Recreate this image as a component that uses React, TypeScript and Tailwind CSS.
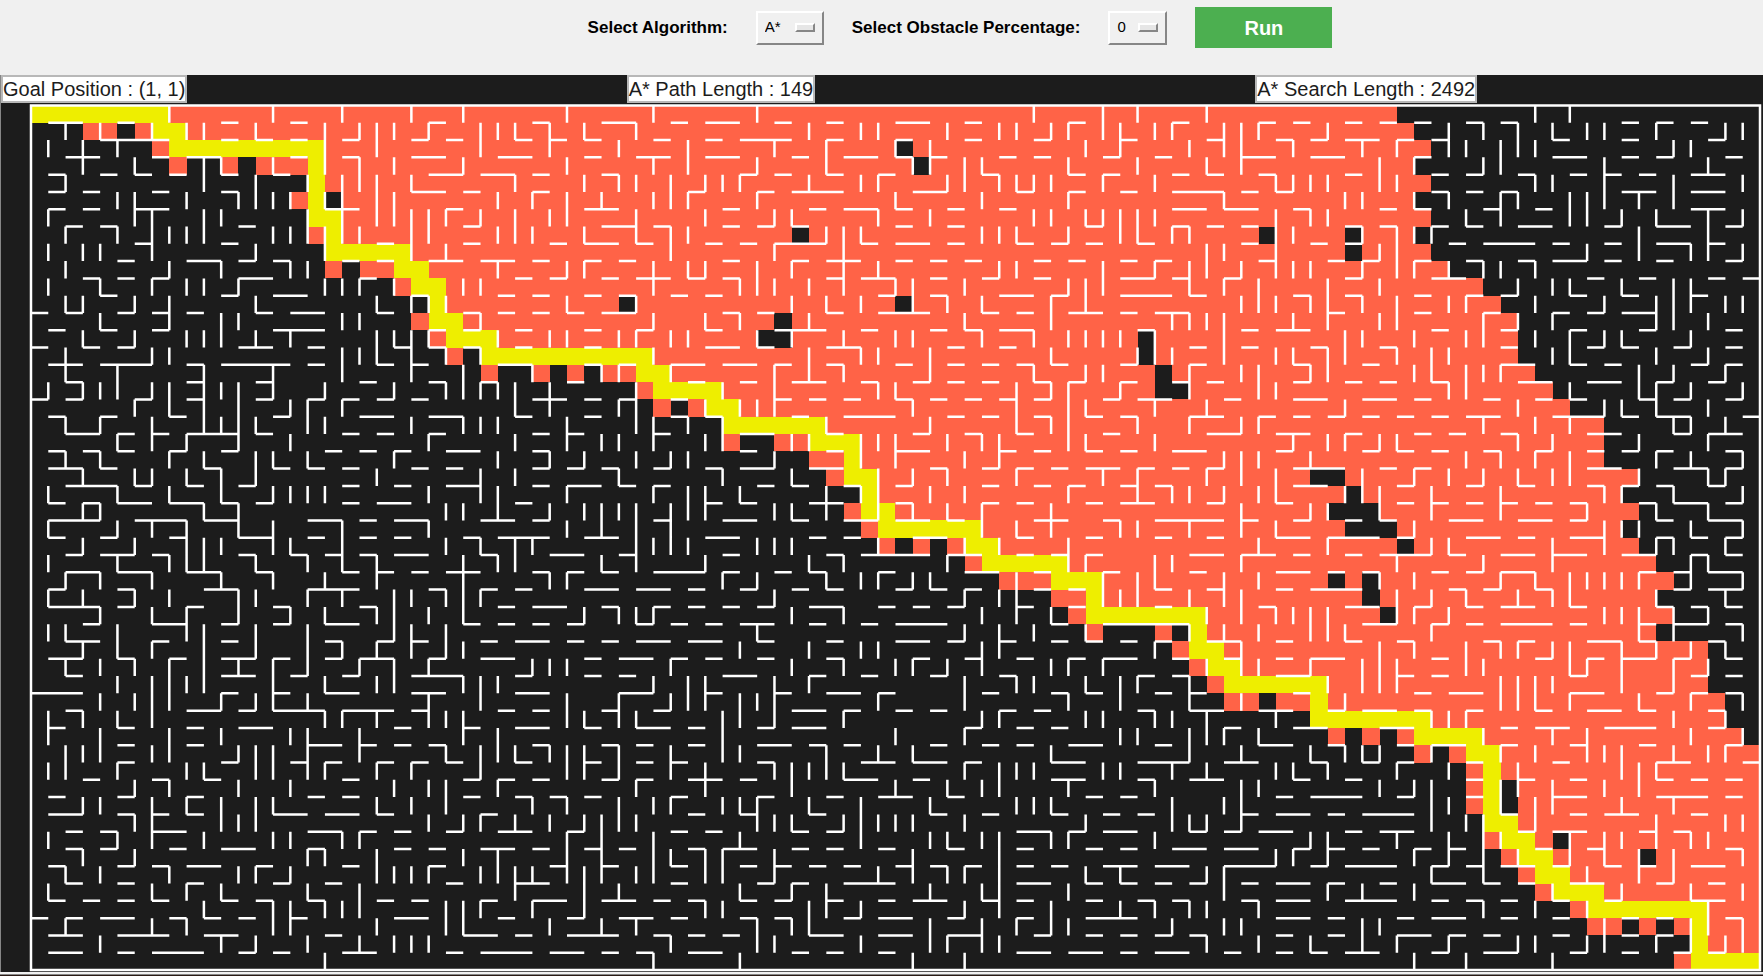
import React from 'react';

const COLS = 100;
const ROWS = 50;
const CELL = 17.3;

// Horizontal walls under each row: "column.length" (length defaults to 1).
const H_WALLS: string[] = [
  '1.2 5 11 15 23 29 33.2 37 39.2 43 46 50.2 54 60 66 71 73 76 78 80 83 85 92 94 96',
  '4.4 11 13 15 18 22 24 28 30 32 36 39 41.3 46 50 54 58 63 68 72 74 76.2 79 81 88 92 97',
  '2.2 7 9.2 15 18 22.2 27.2 32 35.2 39.2 44 47.2 50 52 56 58 62 65 70.2 74.2 80 88.2 92 94 98',
  '1 4 6 8 11 14 23.2 26.2 29 33 41 43 46 49 55 60 62 66 68 71 76 81 83 86 89 91 93 96.2',
  '1 3 7 11 22.2 25 29 38 42 44.3 51.2 57 60 63 66.3 70 72 81 83 85 92.2 96.2',
  '1 3 6.2 17.2 24 32.2 40 45 47.2 50 53 56 66.2 69.2 73 78 80 84 87 96.2',
  '2 4 12 25 33.2 36 40 42 44 50 53 61 66 68 70 76 78 81 83 86.2 91 94.2 98',
  '6 11 20 25 30 32.2 35 39 41 43.3 48 50.2 53 57 59 61 64 70 74 76 82 84.3 88 91 94.2 97',
  '5 9.2 12 14 18 20 23.2 26.2 29 32 34 40 44 46.2 50 52 54 58 60 63 65 71 75 77 80 83 86 88.2 91 94 98',
  '3 5 7 12.2 19 28 30 33 35.2 38 40 46 48.2 52 55 58 63.2 66 69 76 81.2 90 93 97 99',
  '4 11 14.2 22 27 29 32 34 37 39 49 52 56.2 59 63.3 67 73 76 80 83 85 89 92 96',
  '0 2 5 7 9 13 15.2 20 25 27 29 31 33.2 40 42 46 49.3 55 57 60.2 63 65.2 75 80 84 88 90 92.2',
  '1 4 7 14.3 23 25 28 32 35 39 43.3 48 52 54 56.2 64 70 72.2 81 85 89 93 98',
  '0 3 5 12.2 16 21 23 25 28 32 39.2 42 46.2 53 56 67 70 74 78 85 90 92 95 98',
  '1.2 4.3 9 11.4 16 20 22 27.2 32 34 37.2 40.2 43 46 50 53 55 57 59 63 67 73 77 85.2 89 91 96 98',
  '2 9 13 19 23 26 31 38 41 44.2 48 51 53 55 58 60 63 66 68 73 76 78 81 86.2 90.2 94 97',
  '0 2 6 9 13 16 18 20 22 29.2 32 34 37 43 45 47 50 52 54 56 58 62 64.2 69 73.2 77.2 80 84 87 89 93 95 98',
  '1 4 8 14 19.2 23.2 28 32 37 39 44 47.3 53 55 58 61 63 67.2 71 73 75 77 79 81 83.2 88.3 92 94.2 99',
  '2.2 5 7 9.3 13 18 20 23 29 31 36 41.2 46 51 54 57 62 68.2 72.2 76 80 82 85 90.2 95 97.2',
  '1 3 5 8 11 17 19 21 24.2 29 41 46 50.2 56 58 61 63 66.2 72 77 79 81 84 87 90 92 94 98',
  '1.2 4 10 14 16 18 22 24 29 31 33 36 39 41.2 45.2 52 55 57 59 61.2 64 66 68 73.3 78 80 90.2 95.2 98',
  '2.3 6 9 12 18 21 24.2 29 31.2 34 36 42 44 47 50 55 58 60 63 65 73.2 79 83 86 90 92 94 97',
  '1 3 5.2 8.2 11 13 18 20.2 28 39 41 45.2 50 55 57 61 63.2 68 72 79 81 83 85 87 89 93 95.2 98',
  '1.3 6.3 10.2 16.2 19 21.2 26.2 29 36 40.2 44 47.2 50.2 53 58.2 62 65.4 70 73 76 78 82.2 86.2 89 94 97.2',
  '1 4 8 12.2 16 19 21 25 27.3 32.2 39.2 45 47 51.2 57 61 65 68 72.2 75.3 79 83.2 86 89.2 94 96 98',
  '2 4.2 7 12 15 17 19 21.2 26 30.2 34 40 46 48.4 53.2 57 59 61 67.2 70.2 73 76 78.3 82 85.2 88.2 92.2 96 98',
  '2.2 5.2 9.2 13 18 20 22 24.2 29 31 33 36.3 40 43 45 49 54.2 58 62 67 72.2 75 77 81 83 85.2 93 95 97.2',
  '1 5 10.2 16.3 23 26 28 32.2 35.2 38 41 44 46 50 52 54 58 60 65 68 72 74.3 82 84 87 95 97.2',
  '1.3 5 9 14 19 27 29.2 33 36 38 40 42 45.2 49 51 53 57 60 65 71 76.2 80 83 85.2 89 94 96 98',
  '3 7.2 11 14 17.2 25 27 29 31 35 37 39 41.2 45 48 50.3 59 62.5 77.2 81 83 85.3 89 93 95.2 98',
  '2.2 7 11 17 20 22 26 28.2 31 33 35.2 38.2 42 46 50.2 53 56 59 61 63 65 68.2 72 76 79 84 86 90.2 93 97',
  '1.2 5 8 11.2 14 17 19.2 23 26.2 32 34.2 37 39 42 46 51 54 57 60 62.2 66 69 72 74.2 81 87 90 92.2 95 98',
  '2 11.2 15 18 22.3 28 32 34 40.2 45 48 52 56 64 66 72.2 79 81 89 96 98',
  '0.3 11 14 17.2 22.2 28.2 34.2 39 43 46.2 49 55 59 61 65 67 73 80 82.2 89.2 94 96 98',
  '2 9.2 12 14.3 18.3 22 27 29 33 36 44.2 47 50 52 56 58 64 67.2 71.2 75 77.2 80 83 87 90.2 93 97',
  '1 5 9 12.2 21 25 28.2 32 35.2 38 42 44.2 54 57 59 69 73.2 78.2 85 87.2 91.3 97',
  '5 9 16.2 19 21 23 29 33 35 38 42.2 45 47 52 55 57 60.2 65 71.2 75 79 81.2 85 89 93 98',
  '5 11 15 17 20 22 24 28 32 35 37 42 48.2 51.2 54 59.2 64.3 69.2 74 77 79 83 88 94.2 99',
  '3 7 10 18 25 27 29 33 35 38.2 41 47.2 51 59.2 64 67.2 73 76 83 86 89 94 96 98',
  '1 5 9 16 18 25 28 30 32 37 42 46 49.2 53 61 63 72 74.3 79 83 88.2 94.3 98',
  '1.2 5 7 9 14.2 17.2 20 26 38 41 45 52 55 59 62 64 70 72.2 75 77.3 85 89 91.2 96',
  '2 4 7.2 16.2 19 21 24 27.2 31 37 39 44 46 57.2 60 62.2 67 69 71.2 76 78.2 86 88.2 93 95',
  '2 4 8 11.2 16 21 23 26.2 29 32 34 38 40.2 44 46 49 53 57 61 63 66.2 69.2 73 75 77 80 82 87 90 98',
  '1 5 7 9.2 13 18 23 30 33 37 41 43 45 47 50 52 54 57 59 62.2 65.2 69.3 74 76.3 81 83 85.2 88 91 93 96.2',
  '2 5 9 14 17 24 28.2 37 42 44 47.3 57.2 61 63 65 67 70 72.2 75 78 81.2 84 86 89.2 94 97',
  '1 3 5 7 11 13 16 20 22 26 29.2 33.2 36 38 41 43 46 49 51.2 55 57 61 64 66 70 72.2 76.3 81 83 85 88 91 96.2',
  '0 2 4.2 8 10 12 15 21.2 27 31 34.2 37 41 43 47 49.2 53 57 61.3 72.2 75 79 81.2 85 88 92 94 98',
  '1.2 5.3 10.2 17 25.2 28 31.3 36 38 40 45.2 49.2 53.2 58 61 63 65 67 72 75 79.2 82 84 88 92 94',
  '1.2 5 7.3 12 14 18.2 24 26.3 30.2 33 35 38.2 44 46 49 57.2 60.2 63 65.2 69 72 74 76.2 81 84.2 89 92 95 97',
];

// Vertical walls in each row, listed by grid line.
const V_WALLS: string[] = [
  '8 14 18 22 25 31 36 42 58 62 64 68 87 89',
  '2 4 7 9 10 13 17 19 20 21 23 26 27 28 30 32 35 45 48 49 53 56 57 59 60 62 63 65 66 69 70 71 75 82 84 86 88 90 91 94 98 99',
  '1 3 5 17 20 26 30 34 38 43 46 50 52 61 63 67 69 70 73 77 79 82 83 85 86 87 95 96',
  '3 6 10 11 14 17 19 21 25 31 36 38 42 46 51 52 54 55 60 64 68 70 78 80 84 85 91 97',
  '2 10 13 16 18 19 20 22 28 32 34 35 37 39 40 41 45 48 49 53 54 56 57 58 59 62 65 72 73 74 75 78 79 87 88 91 95 99',
  '5 6 9 12 13 14 15 17 18 20 21 27 29 31 33 36 37 38 42 50 55 60 69 76 77 80 82 85 86 89 90 91 93 95',
  '1 6 7 10 11 16 18 20 21 22 23 24 26 28 30 31 35 39 43 44 49 52 58 59 61 62 63 64 65 72 74 75 83 85 89 90 92 94 97 99',
  '2 5 7 8 9 10 14 15 16 17 18 19 22 23 27 28 29 32 35 37 38 46 47 48 55 56 57 60 63 64 66 67 72 73 77 79 80 81 93 97',
  '1 3 4 7 13 17 22 24 37 43 47 68 69 72 78 79 90 93 96 97 99',
  '2 8 11 15 16 27 31 32 36 38 39 42 44 47 49 56 57 62 65 67 68 70 72 73 74 77 79 80 82 84 85 87',
  '1 4 7 9 10 12 17 18 19 21 25 26 36 41 42 43 45 47 50 51 54 60 61 62 67 69 71 75 78 86 88 89 92 95 96',
  '2 3 6 8 13 20 22 23 24 31 35 44 46 48 51 53 55 59 61 70 71 72 74 75 77 79 82 83 87 91 94 95 96 98 99',
  '4 8 11 12 18 19 26 36 39 41 45 54 59 66 67 68 69 73 75 78 79 84 86 88 94 95 97',
  '3 6 9 10 11 13 15 20 21 22 23 27 30 31 34 35 37 38 42 44 47 50 51 55 58 60 61 62 63 65 69 76 77 80 83 84 87 89 91 92 96',
  '2 7 8 18 19 20 22 24 26 36 45 48 49 52 59 64 65 66 69 72 73 75 76 79 81 82 88 89 94 97',
  '2 5 10 14 18 22 25 29 33 34 37 43 45 47 52 58 61 62 67 70 71 74 75 80 81 83 84 85 93 95 98',
  '1 3 4 5 7 8 10 11 12 14 17 21 24 25 26 27 28 30 35 40 43 49 50 57 59 60 63 67 71 72 82 83 89 93 94 96 99',
  '6 8 10 12 15 16 18 28 30 34 35 39 41 42 43 51 57 60 61 65 68 76 86 91 92 94 97',
  '2 4 7 10 11 12 13 16 17 22 25 26 27 31 35 36 38 40 46 52 57 59 60 64 67 70 71 84 87 89 95 96 98',
  '5 7 9 12 15 23 28 31 33 34 36 39 40 44 45 48 49 50 53 55 56 60 61 65 73 75 76 78 79 86 88 93 97',
  '2 4 8 10 13 14 16 21 27 30 32 35 37 38 43 48 50 54 56 69 70 71 74 83 85 87 89 94 96 99',
  '3 6 7 9 11 13 20 26 28 34 40 44 49 51 53 57 62 64 68 70 72 77 80 82 84 86 88 89 93 97 98',
  '1 5 8 11 14 15 16 17 23 26 27 31 36 38 39 41 46 48 49 52 54 60 64 66 67 69 71 72 76 77 78 81 85 91 92 95 99',
  '3 4 10 12 24 25 27 30 32 33 34 35 37 38 39 43 44 46 49 51 53 55 59 70 74 75 78 81 85 90 94 97',
  '1 5 7 9 12 14 18 23 31 33 35 37 55 57 59 63 64 67 70 72 80 91 92 93 96 99',
  '3 6 9 10 11 14 15 18 24 26 28 29 35 36 37 38 42 43 44 49 54 56 60 71 75 81 82 88 91 94 95 98',
  '1 5 8 9 10 13 16 18 20 25 27 28 33 35 39 45 47 53 60 61 65 66 70 79 84 88 96 97',
  '2 4 7 11 14 17 20 25 30 31 40 42 46 48 49 51 52 57 62 64 65 69 71 78 80 85 87 89 90 91 92 93 96 99',
  '1 3 6 8 12 13 16 18 21 22 24 25 26 43 54 56 57 62 63 64 67 69 70 79 81 83 86 88 89 94 98',
  '4 7 9 12 15 17 20 21 23 25 32 34 35 36 44 47 55 57 59 68 70 72 73 74 75 79 80 82 91 92 93 95 97',
  '1 2 5 9 10 13 16 21 22 24 42 54 56 58 61 67 69 71 74 75 76 81 93 95 99',
  '3 5 7 10 13 16 18 20 22 24 25 41 45 48 49 55 56 65 70 78 80 83 85 86 88 89 92 94 96 98',
  '2 4 6 8 10 12 14 16 19 21 23 29 30 31 37 44 47 50 51 53 55 59 60 62 68 70 71 74 77 78 79 83 84 89 90 92 95 97',
  '5 7 8 9 10 14 17 20 21 25 26 27 36 38 39 43 45 54 57 58 61 63 64 67 75 77 78 79 85 86 87 88 92 95',
  '4 6 7 8 11 13 14 16 23 26 31 34 37 38 39 41 42 43 49 54 60 63 67 70 76 85 86 87 89 93 96 99',
  '1 3 5 7 17 18 20 23 24 25 31 32 34 35 40 41 43 47 55 56 61 62 65 66 68 72 81 82 83 95 98',
  '1 4 8 11 15 16 19 25 27 40 50 54 63 64 67 68 69 71 84 88 90 96 99',
  '2 3 4 7 8 12 13 14 16 19 24 26 27 28 30 31 32 34 37 40 41 46 49 51 59 67 70 74 76 77 78 81 85 87 90 91 92 95 97 98',
  '1 2 5 9 10 13 14 16 17 20 22 26 31 32 34 37 39 43 44 45 46 47 54 56 57 58 62 63 66 68 72 73 75 79 82 86 92 93 94',
  '6 8 12 15 21 23 24 27 35 39 44 50 53 55 56 60 65 70 71 78 80 81 85 86 88 91 93',
  '3 4 7 9 11 13 14 20 22 24 29 31 34 36 37 40 41 42 45 48 52 57 58 59 66 69 70 81 82 85 87 88 92 95',
  '6 7 11 12 13 23 25 26 28 30 32 33 34 35 42 43 44 47 48 49 50 51 54 61 66 67 68 70 81 83 84 87 94 98 99',
  '1 5 7 10 14 15 18 19 31 33 36 41 48 52 53 55 56 59 60 65 74 75 79 82 84 85 89 91 92 94 96 97',
  '3 6 16 17 20 25 27 31 33 36 37 39 40 43 51 56 72 73 75 80 82 84 86 89 91 93 95 99',
  '2 4 8 12 13 15 20 21 22 23 26 27 28 29 31 32 33 35 36 39 40 43 49 51 53 54 56 61 63 68 69 81 84 90 93 95',
  '1 7 9 11 16 19 28 32 34 41 44 46 52 55 56 60 69 75 77 80 88 92 96 99',
  '10 14 15 17 18 19 24 25 26 29 32 39 40 45 46 48 54 56 59 63 65 67 68 71 84 87 90 97',
  '2 7 9 14 15 20 24 25 30 33 35 42 44 45 52 55 57 59 60 66 69 70 77 78 91 96 97 99',
  '4 11 13 16 19 21 22 23 37 42 43 48 52 53 55 56 68 71 74 77 79 82 86 87 90 91 94 96 98 99',
  '17 36 41 51 54 80 83 88',
];

// First and last column of the solution path in each row.
const PATH: [number, number][] = [
  [0, 7], [7, 8], [8, 16], [16, 16], [16, 16], [16, 16], [16, 17], [17, 17], [17, 21], [21, 22],
  [22, 23], [23, 23], [23, 24], [24, 26], [26, 35], [35, 36], [36, 39], [39, 40], [40, 45], [45, 47],
  [47, 47], [47, 48], [48, 48], [48, 49], [49, 54], [54, 55], [55, 59], [59, 61], [61, 61], [61, 67],
  [67, 67], [67, 68], [68, 69], [69, 74], [74, 74], [74, 80], [80, 83], [83, 84], [84, 84], [84, 84],
  [84, 84], [84, 85], [85, 86], [86, 87], [87, 88], [88, 90], [90, 96], [96, 96], [96, 96], [96, 99],
];

// Exclusive end column of the explored area in each row.
const FRONTIER: number[] = [
  79, 80, 81, 80, 81, 80, 81, 80, 81, 82,
  84, 85, 86, 86, 86, 87, 88, 89, 91, 91,
  91, 93, 92, 93, 92, 93, 94, 95, 94, 95,
  94, 97, 97, 97, 98, 98, 99, 100, 100, 100,
  100, 100, 100, 100, 100, 100, 100, 100, 100, 100,
];

// Cells explored on the near side of the path.
const EXPLORED: Record<number, number[]> = {
  1: [3, 4, 6], 2: [7], 3: [8, 11, 13, 14, 15], 5: [15], 7: [16], 9: [17, 19, 20], 10: [21], 12: [22],
  13: [23], 14: [24], 15: [26, 29, 31, 33, 34], 16: [35], 17: [36, 38], 19: [40, 43, 44], 20: [45, 46],
  21: [46], 23: [47], 24: [48], 25: [49, 51, 53], 26: [54], 27: [56, 57, 58], 28: [59, 60], 29: [60],
  30: [61, 65], 31: [66], 32: [67], 33: [68], 34: [69, 70, 72, 73], 36: [75, 77, 79], 37: [80, 82],
  38: [83], 39: [83], 40: [83], 42: [84], 43: [85], 44: [86], 45: [87], 46: [89], 47: [90, 91, 93, 95],
  49: [95],
};

// Cells inside the explored area that were never visited.
const UNVISITED: Record<number, number[]> = {
  2: [50], 3: [51], 5: [17], 7: [44, 71, 76], 8: [76], 11: [34, 50], 12: [43], 13: [42, 43, 64],
  14: [64], 15: [65], 16: [65, 66], 21: [74, 75], 22: [76], 23: [75, 76, 77], 24: [76, 77, 78],
  25: [79], 27: [75, 77], 28: [77], 29: [78], 39: [85], 40: [85], 42: [88], 43: [93],
};

const cell = (col: number, row: number, span = 1) =>
  `M${(col * CELL).toFixed(1)} ${(row * CELL).toFixed(1)}h${(span * CELL).toFixed(1)}v${CELL}h${(-span * CELL).toFixed(1)}z`;

const cells = (map: Record<number, number[]>) =>
  Object.entries(map)
    .map(([row, cols]) => cols.map((col) => cell(col, Number(row))).join(''))
    .join('');

const exploredArea =
  PATH.map(([, end], row) => (FRONTIER[row] > end + 1 ? cell(end + 1, row, FRONTIER[row] - end - 1) : '')).join('') +
  cells(EXPLORED);

const unvisitedArea = cells(UNVISITED);

const pathArea = PATH.map(([start, end], row) => cell(start, row, end - start + 1)).join('');

const walls =
  H_WALLS.map((line, i) =>
    line
      .split(' ')
      .map((token) => {
        const [col, length = '1'] = token.split('.');
        return `M${(Number(col) * CELL).toFixed(1)} ${((i + 1) * CELL).toFixed(1)}h${(Number(length) * CELL).toFixed(1)}`;
      })
      .join(''),
  ).join('') +
  V_WALLS.map((line, row) =>
    line
      .split(' ')
      .map((k) => `M${(Number(k) * CELL).toFixed(1)} ${(row * CELL).toFixed(1)}v${CELL}`)
      .join(''),
  ).join('');

function Maze() {
  return (
    <svg viewBox="0 0 1763 869" className="block w-full" role="img" aria-label="Maze">
      <g transform="translate(30 2.5)">
        <path d={exploredArea} fill="#ff6347" shapeRendering="crispEdges" />
        <path d={unvisitedArea} fill="#1c1c1c" shapeRendering="crispEdges" />
        <path d={pathArea} fill="#eeee00" shapeRendering="crispEdges" />
        <path d={walls} stroke="#ffffff" strokeWidth="2.5" fill="none" />
        <rect width={COLS * CELL} height={ROWS * CELL} stroke="#ffffff" strokeWidth="2.5" fill="none" />
      </g>
    </svg>
  );
}

function OptionMenu({ id, options, className }: { id: string; options: string[]; className: string }) {
  return (
    <div className={`relative h-[34px] ${className}`}>
      <select
        id={id}
        className="h-full w-full appearance-none border-2 border-t-white border-l-white border-r-[#868686] border-b-[#868686] bg-[#f0f0f0] pl-[7px] text-[15px] text-black"
      >
        {options.map((option) => (
          <option key={option}>{option}</option>
        ))}
      </select>
      <span className="pointer-events-none absolute top-3 right-[9px] h-[9px] w-5 border-2 border-t-white border-l-white border-r-[#868686] border-b-[#868686] bg-[#e6e6e6]" />
    </div>
  );
}

function Readout({ children }: { children: React.ReactNode }) {
  return (
    <div>
      <p className="inline-block h-7 border-2 border-[#b8b8b8] bg-white text-xl leading-6 whitespace-nowrap text-[#1c1c1c]">
        {children}
      </p>
    </div>
  );
}

export default function App() {
  return (
    <div className="bg-[#f0f0f0] font-['Liberation_Sans',Arial,sans-serif] text-black">
      <header className="flex h-[75px] items-start justify-center pt-[7px] pl-[157px]">
        <form className="flex items-center gap-7" onSubmit={(e) => e.preventDefault()}>
          <label htmlFor="algorithm" className="text-[17px] font-bold">
            Select Algorithm:
          </label>
          <OptionMenu id="algorithm" options={['A*', 'BFS', 'DFS']} className="w-[68px]" />
          <label htmlFor="obstacles" className="text-[17px] font-bold">
            Select Obstacle Percentage:
          </label>
          <OptionMenu id="obstacles" options={['0', '10', '20', '30']} className="w-[59px]" />
          <button type="submit" className="h-[41px] w-[137px] bg-[#4caf50] text-xl font-bold text-white">
            Run
          </button>
        </form>
      </header>
      <main className="border-l border-[#868686] bg-[#1c1c1c]">
        <div className="grid grid-cols-[626fr_629fr_508fr]">
          <Readout>Goal Position : (1, 1)</Readout>
          <Readout>A* Path Length : 149</Readout>
          <Readout>A* Search Length : 2492</Readout>
        </div>
        <Maze />
      </main>
      <div className="h-[3px] border-b border-[#868686] bg-[#f0f0f0]" />
      <div className="h-[3px] bg-[#2a1a14]" />
    </div>
  );
}
